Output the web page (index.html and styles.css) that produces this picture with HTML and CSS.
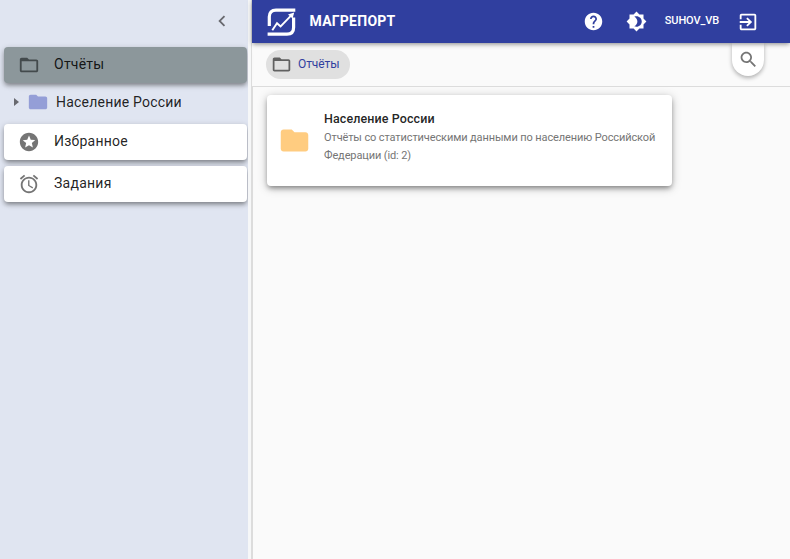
FILE: index.html
```html
<!DOCTYPE html>
<html lang="ru">
<head>
<meta charset="utf-8">
<title>Магрепорт</title>
<link rel="stylesheet" href="styles.css">
</head>
<body>
<div class="app">
  <aside class="sidebar">
    <div class="collapse"><svg class="icon i22" viewBox="0 0 24 24"><path d="M15.41 7.41 14 6l-6 6 6 6 1.41-1.41L10.83 12z"/></svg></div>
    <nav class="menu">
      <a class="item active"><svg class="icon i22" viewBox="0 0 24 24"><path d="M20 6h-8l-2-2H4c-1.1 0-1.99.9-1.99 2L2 18c0 1.1.9 2 2 2h16c1.1 0 2-.9 2-2V8c0-1.1-.9-2-2-2zm0 12H4V8h16v10z"/></svg><span>Отчёты</span></a>
      <div class="tree"><svg class="icon arrow" viewBox="0 0 5 8"><path d="M0 0l5 4-5 4z"/></svg><svg class="icon i22 blue" viewBox="0 0 24 24"><path d="M10 4H4c-1.1 0-1.99.9-1.99 2L2 18c0 1.1.9 2 2 2h16c1.1 0 2-.9 2-2V8c0-1.1-.9-2-2-2h-8l-2-2z"/></svg><span>Население России</span></div>
      <a class="item"><svg class="icon i22" viewBox="0 0 24 24"><path d="M11.99 2C6.47 2 2 6.48 2 12s4.47 10 9.99 10C17.52 22 22 17.52 22 12S17.52 2 11.99 2zm4.24 16L12 15.45 7.77 18l1.12-4.81-3.73-3.23 4.92-.42L12 5l1.92 4.53 4.92.42-3.73 3.23L16.23 18z"/></svg><span>Избранное</span></a>
      <a class="item"><svg class="icon i22" viewBox="0 0 24 24"><path d="M22 5.72l-4.6-3.86-1.29 1.53 4.6 3.86L22 5.72zM7.88 3.39L6.6 1.86 2 5.71l1.29 1.53 4.59-3.85zM12.5 8H11v6l4.75 2.85.75-1.23-4-2.37V8zM12 4c-4.97 0-9 4.03-9 9s4.02 9 9 9c4.97 0 9-4.03 9-9s-4.03-9-9-9zm0 16c-3.87 0-7-3.13-7-7s3.13-7 7-7 7 3.13 7 7-3.13 7-7 7z"/></svg><span>Задания</span></a>
    </nav>
  </aside>
  <div class="divider"></div>
  <main class="main">
    <header class="bar">
      <svg class="logo" viewBox="0 0 30 30"><g fill="none" stroke="#fff"><path stroke-width="3.2" d="M28.3 3.1H9Q2.3 3.1 2.3 9.8V19"/><path stroke-width="3.2" d="M.6 27.2h19.4q6.6 0 6.6-6.7V10.5"/><path stroke-width="1.9" d="M5.3 23.2 10 16.2l3.6 3.3L24 8.6"/></g><path fill="#fff" d="M21 7.6 27.2 5.4l-1.6 6.2z"/></svg>
      <h1 class="brand">МАГРЕПОРТ</h1>
      <div class="tools">
        <svg class="icon i21" viewBox="0 0 24 24"><path d="M12 2C6.48 2 2 6.48 2 12s4.48 10 10 10 10-4.48 10-10S17.52 2 12 2zm1 17h-2v-2h2v2zm2.07-7.75l-.9.92C13.45 12.9 13 13.5 13 15h-2v-.5c0-1.1.45-2.1 1.17-2.83l1.24-1.26c.37-.36.59-.86.59-1.41 0-1.1-.9-2-2-2s-2 .9-2 2H8c0-2.21 1.79-4 4-4s4 1.79 4 4c0 .88-.36 1.68-.93 2.25z"/></svg>
        <svg class="icon i21 theme" viewBox="0 0 24 24"><path d="M20 8.69V4h-4.69L12 .69 8.69 4H4v4.69L.69 12 4 15.31V20h4.69L12 23.31 15.31 20H20v-4.69L23.31 12 20 8.69zM12 18c-.89 0-1.74-.2-2.5-.55C11.56 16.5 13 14.42 13 12s-1.44-4.5-3.5-5.45C10.26 6.2 11.11 6 12 6c3.31 0 6 2.69 6 6s-2.69 6-6 6z"/></svg>
        <span class="user">SUHOV_VB</span>
        <svg class="icon i22" viewBox="0 0 24 24"><path d="M10.09 15.59L11.5 17l5-5-5-5-1.41 1.41L12.67 11H3v2h9.67l-2.58 2.59zM19 3H5c-1.11 0-2 .9-2 2v4h2V5h14v14H5v-4H3v4c0 1.1.89 2 2 2h14c1.1 0 2-.9 2-2V5c0-1.1-.9-2-2-2z"/></svg>
      </div>
    </header>
    <div class="crumbs">
      <a class="chip"><svg class="icon i21" viewBox="0 0 24 24"><path d="M20 6h-8l-2-2H4c-1.1 0-1.99.9-1.99 2L2 18c0 1.1.9 2 2 2h16c1.1 0 2-.9 2-2V8c0-1.1-.9-2-2-2zm0 12H4V8h16v10z"/></svg><span>Отчёты</span></a>
      <div class="search"><svg class="icon i21" viewBox="0 0 24 24"><path d="M15.5 14h-.79l-.28-.27C15.41 12.59 16 11.11 16 9.5 16 5.91 13.09 3 9.5 3S3 5.91 3 9.5 5.91 16 9.5 16c1.61 0 3.09-.59 4.23-1.57l.27.28v.79l5 4.99L20.49 19l-4.99-5zm-6 0C7.01 14 5 11.99 5 9.5S7.01 5 9.5 5 14 7.01 14 9.5 11.99 14 9.5 14z"/></svg></div>
    </div>
    <div class="content">
      <section class="card">
        <svg class="icon folder" viewBox="0 0 24 24"><path d="M10 4H4c-1.1 0-1.99.9-1.99 2L2 18c0 1.1.9 2 2 2h16c1.1 0 2-.9 2-2V8c0-1.1-.9-2-2-2h-8l-2-2z"/></svg>
        <div class="text">
          <h2>Население России</h2>
          <p>Отчёты со статистическими данными по населению Российской<br>Федерации (id: 2)</p>
        </div>
      </section>
    </div>
  </main>
</div>
</body>
</html>
```

FILE: styles.css
```css
* { box-sizing: border-box; }
body { margin: 0; font-family: Roboto, "Liberation Sans", sans-serif; color: rgba(0, 0, 0, .87); background: #fafafa; overflow: hidden; }
.app { display: flex; width: 790px; height: 559px; }
.icon { display: block; flex: none; fill: currentColor; }
.i22 { width: 22px; height: 22px; }
.i21 { width: 21px; height: 21px; }

.sidebar { width: 248px; flex: none; background: #e0e5f1; }
.collapse { height: 47px; padding: 10px 15px 0 0; display: flex; justify-content: flex-end; color: #68696f; }
.menu { padding: 0 1px 0 4px; font-size: 14px; letter-spacing: .25px; }
.item { display: flex; align-items: center; height: 36px; padding: 0 14px; gap: 14px; background: #fff; border-radius: 4px; box-shadow: 0 3px 4px -1px rgba(0, 0, 0, .3), 0 2px 6px rgba(0, 0, 0, .24); }
.item + .item { margin-top: 6px; }
.item .icon { color: #757575; }
.item span { margin-bottom: 2px; }
.item.active { background: #8c979b; }
.item.active .icon { color: #434a4c; }
.tree { display: flex; align-items: center; height: 41px; padding: 0 0 3px 10px; letter-spacing: .21px; }
.tree span { margin-bottom: 1px; }
.arrow { width: 5px; height: 8px; margin-right: 8px; color: #68696f; }
.blue { color: #949ed7; margin-right: 7px; }

.divider { width: 4px; flex: none; background: #f6f7f8; border-right: 1px solid #dcdcdc; }

.main { display: flex; flex-direction: column; flex: 1; min-width: 0; }
.bar { position: relative; z-index: 2; flex: none; display: flex; align-items: center; height: 43px; padding: 0 31px 0 15px; background: #303f9f; color: #fff; box-shadow: 0 2px 4px -1px rgba(0, 0, 0, .3), 0 1px 6px rgba(0, 0, 0, .2); }
.logo { width: 30px; height: 30px; }
.brand { margin: 0 0 2px 12.5px; font-size: 14px; font-weight: 700; letter-spacing: .25px; line-height: 20px; }
.tools { display: flex; align-items: center; margin-left: auto; }
.theme { margin: 0 18px 0 22px; }
.user { margin: 0 18px 2px 0; font-size: 11px; font-weight: 500; letter-spacing: -.12px; }

.crumbs { flex: none; display: flex; justify-content: space-between; align-items: flex-start; height: 44px; padding: 0 26px 0 14px; border-bottom: 1px solid #dcdcdc; }
.chip { display: flex; align-items: center; gap: 6px; width: 84px; height: 29px; margin-top: 7px; padding-left: 5px; border-radius: 15px; background: #e0e0e0; color: #303f9f; font-size: 12px; letter-spacing: -.1px; }
.chip .icon { color: #616161; }
.chip span { margin-bottom: 1px; }
.search { display: flex; justify-content: center; width: 32px; height: 33px; padding-top: 6px; border-radius: 0 0 16px 16px; background: #fff; color: #757575; box-shadow: 0 2px 4px rgba(0, 0, 0, .3); }

.content { flex: 1; padding: 8px 0 0 14px; border-left: 1px solid #dcdcdc; }
.card { display: flex; align-items: center; width: 405px; height: 91px; padding-left: 10.5px; background: #fff; border-radius: 4px; box-shadow: 0 3px 5px -1px rgba(0, 0, 0, .35), 0 2px 10px rgba(0, 0, 0, .25); }
.folder { width: 33px; height: 33px; color: #ffcc80; }
.text { margin: 0 0 6px 13.5px; white-space: nowrap; }
h2 { margin: 0; font-size: 12.5px; font-weight: 500; line-height: 18px; letter-spacing: .1px; }
p { margin: 0; padding-top: 1px; font-size: 11px; line-height: 18px; letter-spacing: -.11px; color: #757575; }
```
